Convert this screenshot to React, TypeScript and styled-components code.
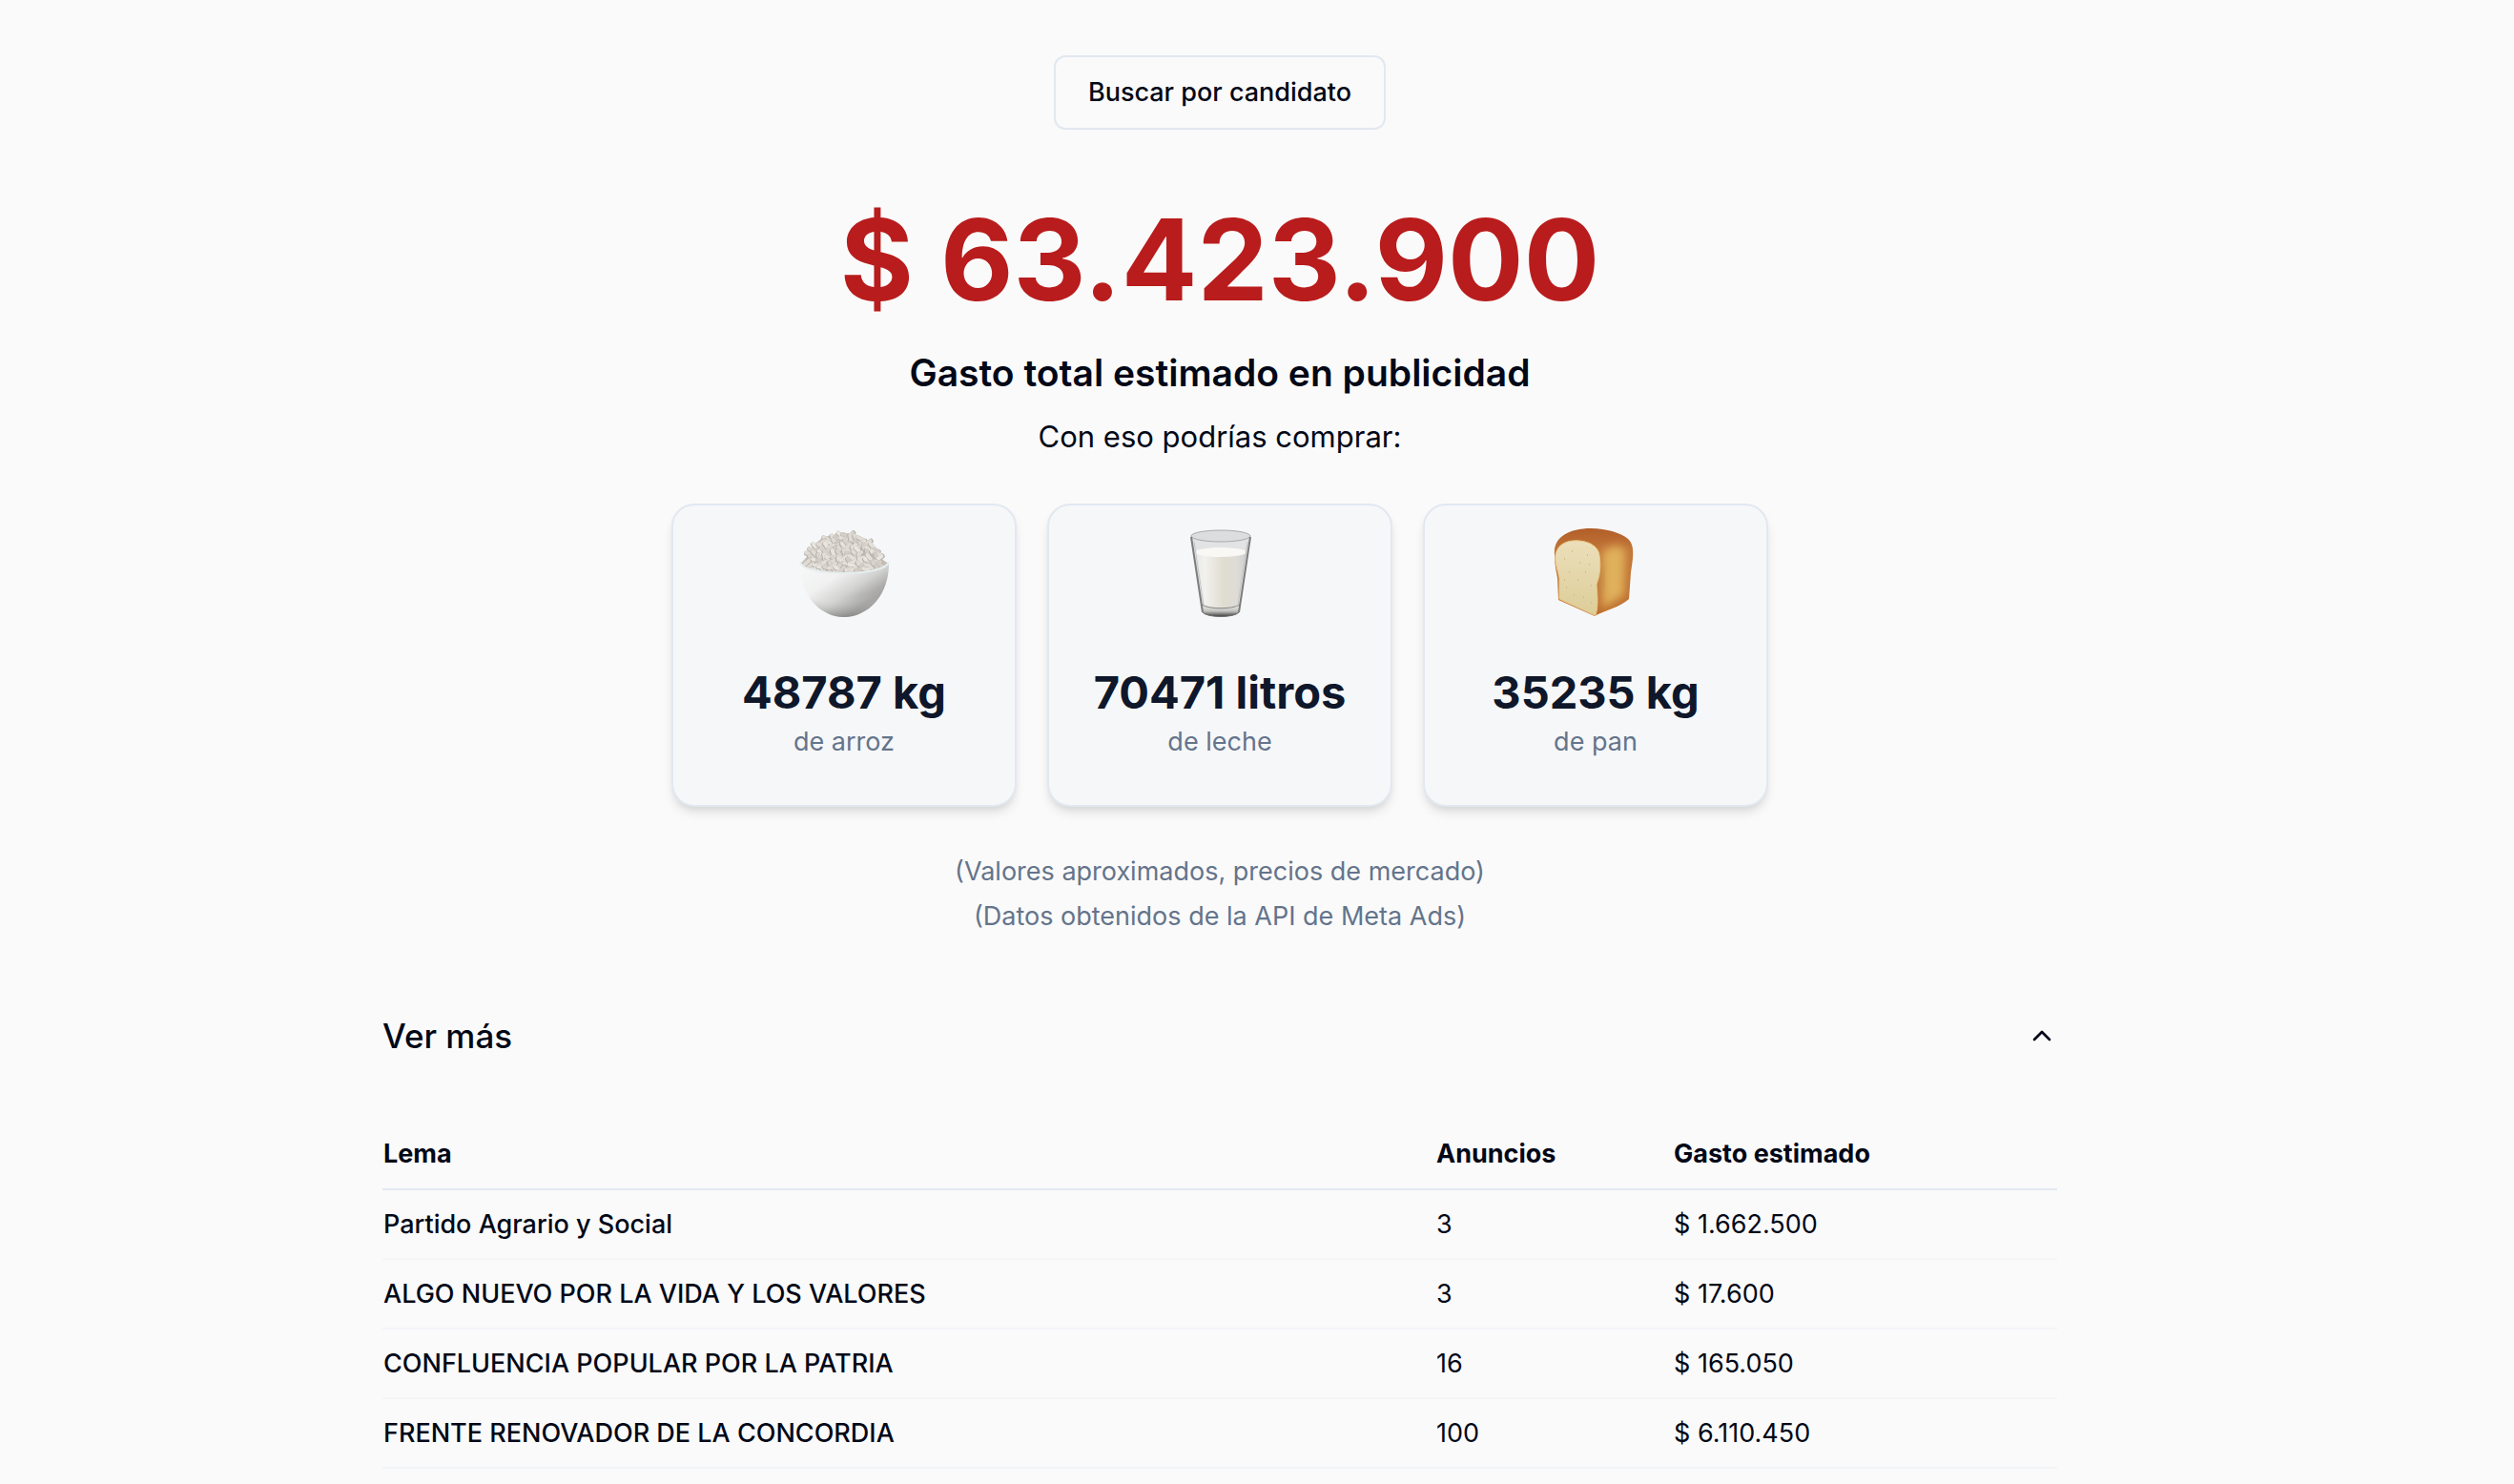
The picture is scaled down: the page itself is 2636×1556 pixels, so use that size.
import React, { useState } from 'react';
import styled, { createGlobalStyle } from 'styled-components';
import { ChevronUp } from 'lucide-react';

const GlobalStyle = createGlobalStyle`
  *, *::before, *::after { box-sizing: border-box; }
  body {
    margin: 0;
    background: #fafafa;
    color: #020817;
    font-family: Inter, "Liberation Sans", sans-serif;
    font-size: 27px;
    line-height: 40px;
  }
  h1, h2, h3, p { margin: 0; }
  button { font: inherit; color: inherit; cursor: pointer; }
`;

const Page = styled.main`
  padding: 58px 78px 0 0;
`;

const Column = styled.div`
  max-width: 1756px;
  margin: 0 auto;
`;

const Hero = styled.section`
  display: flex;
  flex-direction: column;
  align-items: center;
  text-align: center;
`;

const SearchButton = styled.button`
  height: 78px;
  padding: 0 34px;
  border: 2px solid #e2e8f0;
  border-radius: 12px;
  background: transparent;
  font-weight: 500;
`;

const Total = styled.h1`
  margin-top: 76px;
  font-size: 118px;
  line-height: 120px;
  font-weight: 700;
  color: #b91c1c;
`;

const Title = styled.h2`
  margin-top: 27px;
  font-size: 39px;
  line-height: 64px;
  font-weight: 600;
`;

const Lead = styled.p`
  margin-top: 7px;
  font-size: 31px;
  line-height: 56px;
`;

const Cards = styled.ul`
  display: flex;
  flex-wrap: wrap;
  justify-content: center;
  gap: 32px;
  margin: 42px 0 0;
  padding: 0;
  list-style: none;
`;

const Card = styled.li`
  display: flex;
  flex-direction: column;
  align-items: center;
  width: 362px;
  padding: 26px 0 46px;
  border: 2px solid #e2e8f0;
  border-radius: 24px;
  background: #f6f7f9;
  box-shadow: 0 8px 12px -2px rgba(0, 0, 0, 0.1), 0 4px 8px -4px rgba(0, 0, 0, 0.1);
`;

const Amount = styled.h3`
  margin-top: 46px;
  font-size: 47px;
  line-height: 56px;
  font-weight: 700;
  color: #0f172a;
`;

const Product = styled.p`
  margin-top: 4px;
  color: #64748b;
`;

const Notes = styled.div`
  margin-top: 44px;
  line-height: 47px;
  color: #64748b;
`;

const Toggle = styled.button<{ $open: boolean }>`
  display: flex;
  align-items: center;
  justify-content: space-between;
  width: 100%;
  margin-top: 42px;
  padding: 32px 0;
  border: 0;
  background: none;
  font-size: 35px;
  line-height: 56px;
  font-weight: 500;
  svg { transform: rotate(${p => (p.$open ? 0 : 180)}deg); }
`;

const Table = styled.table`
  width: 100%;
  margin-top: 28px;
  border-collapse: collapse;
  table-layout: fixed;
  text-align: left;
`;

const HeadCell = styled.th<{ $share?: string }>`
  width: ${p => p.$share ?? 'auto'};
  height: 73px;
  padding: 0 1px;
  border-bottom: 2px solid #e2e8f0;
  font-weight: 700;
`;

const Cell = styled.td<{ $strong?: boolean }>`
  height: 73px;
  padding: 0 1px;
  border-bottom: 2px solid #f3f5f7;
  font-weight: ${p => (p.$strong ? 500 : 400)};
`;

const Picture = styled.svg`
  display: block;
  width: 110px;
  height: 96px;
  overflow: visible;
`;

type Grain = { x: number; y: number; angle: number; tone: string };

const TONES = ['#e9e5e0', '#e0dbd5', '#d9d4cd', '#e4e0da', '#d3cdc6'];

const grains: Grain[] = [];
for (let row = 0; row < 13; row++) {
  for (let col = 0; col < 18; col++) {
    const seed = Math.abs(Math.sin((row * 18 + col + 1) * 12.9898) * 43758.5453) % 1;
    const x = 8 + col * 6 + (row % 2) * 3 + Math.round(seed * 3);
    const y = 5 + row * 4;
    const dx = (x - 55) / 40;
    const dy = (y - 41) / 37;
    if (dx * dx + dy * dy < 1) {
      grains.push({ x, y, angle: Math.round(seed * 130) - 50, tone: TONES[Math.floor(seed * 97) % TONES.length] });
    }
  }
}

function Rice() {
  return (
    <Picture viewBox="0 0 110 96" aria-hidden="true">
      <defs>
        <linearGradient id="bowl" x1="0" y1="0.1" x2="0.85" y2="0.9">
          <stop offset="0" stopColor="#f6f7f7" />
          <stop offset="0.35" stopColor="#f1f1f1" />
          <stop offset="0.6" stopColor="#d2d2d1" />
          <stop offset="0.85" stopColor="#9d9c9b" />
          <stop offset="1" stopColor="#a8a7a6" />
        </linearGradient>
        <radialGradient id="bowlShade" cx="0.45" cy="0" r="1">
          <stop offset="0.65" stopColor="#fff" stopOpacity="0" />
          <stop offset="1" stopColor="#777" stopOpacity="0.5" />
        </radialGradient>
      </defs>
      <path d="M9 35C17 29 18 22 24 15C33 5 45 4 55 4C66 3 80 9 86 18C91 25 91 29 102 35C92 52 22 54 9 35Z" fill="#c5bfb8" />
      {grains.map((g, i) => (
        <g key={i} transform={`translate(${g.x} ${g.y}) rotate(${g.angle})`}>
          <rect x="-6" y="-2" width="12" height="5" rx="2" fill="#b5afa8" />
          <rect x="-6" y="-2" width="11" height="4" rx="2" fill={g.tone} />
        </g>
      ))}
      <path d="M9 33C11 49 99 49 102 33C103 68 80 91 55 91C30 91 8 68 9 33Z" fill="url(#bowl)" />
      <path d="M9 33C11 49 99 49 102 33C103 68 80 91 55 91C30 91 8 68 9 33Z" fill="url(#bowlShade)" />
      <path d="M9 33C11 49 99 49 102 33" fill="none" stroke="#e6eeee" strokeWidth="2" />
    </Picture>
  );
}

function Milk() {
  return (
    <Picture viewBox="0 0 110 96" aria-hidden="true">
      <defs>
        <linearGradient id="milk">
          <stop offset="0" stopColor="#e9e9e8" />
          <stop offset="0.2" stopColor="#f2f1ed" />
          <stop offset="0.55" stopColor="#e0dcd0" />
          <stop offset="0.8" stopColor="#dedcd6" />
          <stop offset="1" stopColor="#cfd0d1" />
        </linearGradient>
        <linearGradient id="base" x1="0" y1="0" x2="0" y2="1">
          <stop offset="0" stopColor="#f2f2f0" />
          <stop offset="0.55" stopColor="#c0c0bd" />
          <stop offset="1" stopColor="#3d3d3b" />
        </linearGradient>
      </defs>
      <path d="M25 6L37 86C41 92 71 92 75 86L87 6Z" fill="#e2e3e4" />
      <ellipse cx="56" cy="6" rx="31" ry="6" fill="#dcddde" stroke="#a9aaab" />
      <path d="M29 23L38 77C44 83 68 83 74 77L83 23Z" fill="url(#milk)" />
      <ellipse cx="56" cy="23" rx="27" ry="5" fill="#f9f8f5" />
      <path d="M36 78C44 83 68 83 76 78L75 86C70 92 42 92 37 86Z" fill="url(#base)" />
      <path d="M36 78C44 83 68 83 76 78" fill="none" stroke="#858583" />
      <path d="M37 86C42 92 70 92 75 86" fill="none" stroke="#6a6a68" />
      <path d="M25 7L37 86M87 7L75 86" stroke="#7d7d7d" strokeWidth="2" />
      <path d="M28 12L38 78M84 12L74 78" stroke="#c4c4c4" />
    </Picture>
  );
}

function Bread() {
  return (
    <Picture viewBox="0 0 110 96" aria-hidden="true">
      <defs>
        <linearGradient id="crust" x1="0" y1="0" x2="0" y2="1">
          <stop offset="0" stopColor="#b05c27" />
          <stop offset="0.25" stopColor="#c27538" />
          <stop offset="1" stopColor="#bd6e2c" />
        </linearGradient>
        <linearGradient id="crumb" x1="0" y1="0" x2="0" y2="1">
          <stop offset="0" stopColor="#ecdfba" />
          <stop offset="1" stopColor="#dccd98" />
        </linearGradient>
        <filter id="soft" x="-30%" y="-30%" width="160%" height="160%">
          <feGaussianBlur stdDeviation="5" />
        </filter>
        <clipPath id="loaf">
          <path d="M12 26C10 8 26 -2 50 -2C67 -2 82 3 89 9C97 16 94 30 92 44L90 72C82 80 65 84 54 90L16 73L15 50C13 40 12 34 12 26Z" />
        </clipPath>
      </defs>
      <g clipPath="url(#loaf)">
        <rect x="8" y="-4" width="90" height="98" fill="url(#crust)" />
        <path d="M62 24C70 14 80 16 86 20L85 68L62 82Z" fill="#e0b15c" filter="url(#soft)" />
        <path d="M60 36C66 44 64 56 60 66Z" fill="#b98a45" filter="url(#soft)" />
      </g>
      <path d="M13 26C15 14 26 10 38 11C50 12 58 18 59 26C61 40 59 48 56 57C57 68 58 80 55 89L54 89L17 72L17 50C15 40 12 34 13 26Z" fill="url(#crumb)" stroke="#ebc988" />
      <path d="M22 30h1M30 22h1M38 34h1M46 26h1M27 44h1M36 52h1M44 44h1M50 58h1M24 60h1M32 68h1M42 70h1M50 76h1M48 36h1M22 52h1" stroke="#d1c08a" strokeWidth="2" />
    </Picture>
  );
}

const products = [
  { amount: '48787 kg', name: 'de arroz', Drawing: Rice },
  { amount: '70471 litros', name: 'de leche', Drawing: Milk },
  { amount: '35235 kg', name: 'de pan', Drawing: Bread },
];

const parties = [
  { name: 'Partido Agrario y Social', ads: 3, spend: '$ 1.662.500' },
  { name: 'ALGO NUEVO POR LA VIDA Y LOS VALORES', ads: 3, spend: '$ 17.600' },
  { name: 'CONFLUENCIA POPULAR POR LA PATRIA', ads: 16, spend: '$ 165.050' },
  { name: 'FRENTE RENOVADOR DE LA CONCORDIA', ads: 100, spend: '$ 6.110.450' },
];

export default function App() {
  const [open, setOpen] = useState(true);
  return (
    <Page>
      <GlobalStyle />
      <Column>
        <Hero>
          <SearchButton type="button">Buscar por candidato</SearchButton>
          <Total>$ 63.423.900</Total>
          <Title>Gasto total estimado en publicidad</Title>
          <Lead>Con eso podrías comprar:</Lead>
          <Cards>
            {products.map(({ amount, name, Drawing }) => (
              <Card key={name}>
                <Drawing />
                <Amount>{amount}</Amount>
                <Product>{name}</Product>
              </Card>
            ))}
          </Cards>
          <Notes>
            <p>(Valores aproximados, precios de mercado)</p>
            <p>(Datos obtenidos de la API de Meta Ads)</p>
          </Notes>
        </Hero>
        <Toggle type="button" $open={open} aria-expanded={open} onClick={() => setOpen(!open)}>
          Ver más
          <ChevronUp size={32} aria-hidden="true" />
        </Toggle>
        {open && (
          <Table>
            <thead>
              <tr>
                <HeadCell scope="col">Lema</HeadCell>
                <HeadCell scope="col" $share="249px">Anuncios</HeadCell>
                <HeadCell scope="col" $share="403px">Gasto estimado</HeadCell>
              </tr>
            </thead>
            <tbody>
              {parties.map(party => (
                <tr key={party.name}>
                  <Cell $strong>{party.name}</Cell>
                  <Cell>{party.ads}</Cell>
                  <Cell>{party.spend}</Cell>
                </tr>
              ))}
            </tbody>
          </Table>
        )}
      </Column>
    </Page>
  );
}
